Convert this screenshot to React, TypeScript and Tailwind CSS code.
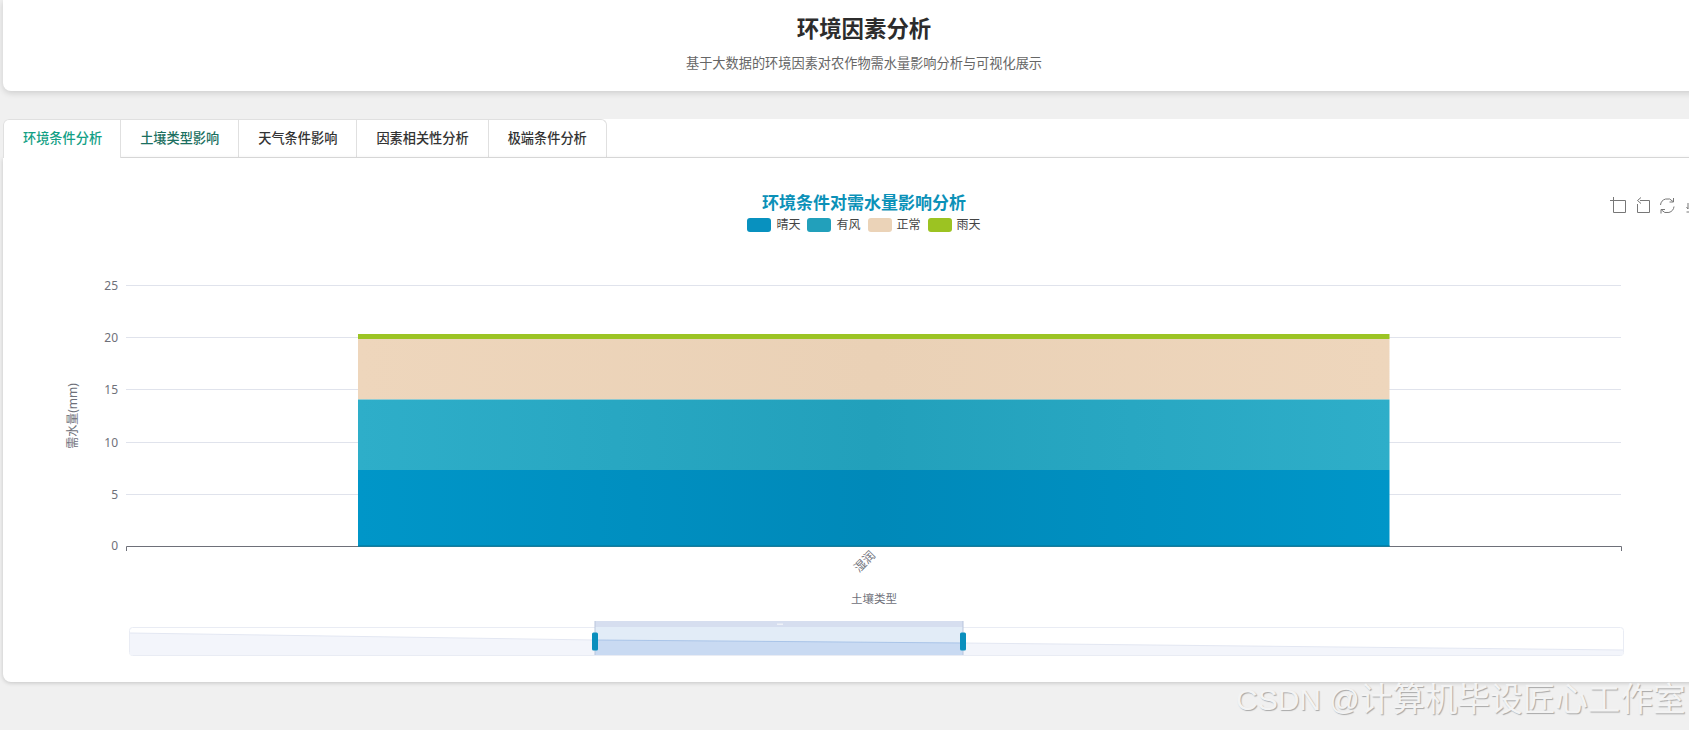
import React from 'react';

const cjk = { fontFamily: '"Noto Sans", "Noto Sans CJK SC", sans-serif' };

const tabs = [
  { name: '环境条件分析', color: 'text-[#12a085]' },
  { name: '土壤类型影响', color: 'text-[#1b6f60]' },
  { name: '天气条件影响', color: 'text-[#333333]' },
  { name: '因素相关性分析', color: 'text-[#333333]' },
  { name: '极端条件分析', color: 'text-[#333333]' },
];

const legend = [
  { name: '晴天', color: 'bg-[#0891bf]' },
  { name: '有风', color: 'bg-[#22a0bb]' },
  { name: '正常', color: 'bg-[#ebd3b8]' },
  { name: '雨天', color: 'bg-[#9cc322]' },
];

const ticks = [
  { label: '25', y: 285.5 },
  { label: '20', y: 337.5 },
  { label: '15', y: 389.5 },
  { label: '10', y: 442.5 },
  { label: '5', y: 494.5 },
];

const Toolbox = () => (
  <svg width="80" height="18" viewBox="0 0 80 18" fill="none" stroke="#777" strokeWidth="1" className="absolute left-[1607px] top-[39px]">
    {/* zoom */}
    <path d="M0 3.5H15.5V15.5H3.5V0" />
    {/* back */}
    <path d="M30 3.5H39.5V15.5H27.5V7M31 0.5L27.5 3.5L31 6.5" />
    {/* restore */}
    <path d="M50.5 8A7 7 0 0 1 63 4.5M64 9.5A7 7 0 0 1 51.5 13M63.5 1V5H59.5M51 16.5V12.5H55" />
    {/* save, runs off the page */}
    <path d="M78 6V12M76.5 10L78 12M76.5 15H79.6" />
  </svg>
);

const Chart = () => (
  <svg width="1722" height="450" viewBox="3 232 1722 450" className="block self-start" style={cjk}>
    <defs>
      <linearGradient id="blue" x1="0" x2="1" y1="0" y2="0">
        <stop offset="0" stopColor="#0096c8" />
        <stop offset="0.5" stopColor="#0089b9" />
        <stop offset="1" stopColor="#0096c8" />
      </linearGradient>
      <linearGradient id="teal" x1="0" x2="1" y1="0" y2="0">
        <stop offset="0" stopColor="#2eaec9" />
        <stop offset="0.5" stopColor="#22a0bb" />
        <stop offset="1" stopColor="#2eaec9" />
      </linearGradient>
      <linearGradient id="sand" x1="0" x2="1" y1="0" y2="0">
        <stop offset="0" stopColor="#eed6bc" />
        <stop offset="0.5" stopColor="#ead1b6" />
        <stop offset="1" stopColor="#eed6bc" />
      </linearGradient>
    </defs>

    {/* y axis */}
    {ticks.map((t) => (
      <g key={t.label}>
        <line x1="126" x2="1621" y1={t.y} y2={t.y} stroke="#e0e3ec" />
        <text x="118" y={t.y + 4} textAnchor="end" fontSize="12" fill="#6e7079">{t.label}</text>
      </g>
    ))}
    <text x="118" y="550" textAnchor="end" fontSize="12" fill="#6e7079">0</text>
    <text transform="translate(77 416) rotate(-90)" textAnchor="middle" fontSize="12" fill="#6e7079">需水量(mm)</text>

    {/* stacked bar */}
    <rect x="358" y="334" width="1031.5" height="5" fill="#9cc424" />
    <rect x="358" y="339" width="1031.5" height="60.5" fill="url(#sand)" />
    <rect x="358" y="399.5" width="1031.5" height="70.5" fill="url(#teal)" />
    <rect x="358" y="470" width="1031.5" height="76" fill="url(#blue)" />

    {/* x axis */}
    <path d="M126.5 551V546.5H1621.5V551" stroke="#6e7079" fill="none" />
    <line x1="358" x2="1389.5" y1="546" y2="546" stroke="#007fa6" strokeWidth="1.5" />
    <text transform="translate(876 556) rotate(-45)" textAnchor="end" fontSize="12" fill="#6e7079">湿润</text>
    <text x="874" y="603" textAnchor="middle" fontSize="11.5" fill="#6e7079">土壤类型</text>

    {/* data zoom */}
    <rect x="129.5" y="627.5" width="1494" height="28" rx="3" fill="#fff" stroke="#e9ecf4" />
    <path d="M130 633L595 640L963 643L1623 650V655H130Z" fill="#f3f5fb" />
    <path d="M130 633L595 640L963 643L1623 650" fill="none" stroke="#e3e7f2" />
    <rect x="595" y="627" width="368" height="28" fill="#e2ecf7" />
    <path d="M595 640L963 643V655H595Z" fill="#c9daf2" />
    <path d="M595 640L963 643" fill="none" stroke="#a9c4e8" />
    <rect x="595" y="621" width="368" height="6" fill="#d6deef" />
    <rect x="777" y="623.5" width="6" height="1.5" fill="#eef1f8" />
    <line x1="595" x2="595" y1="621" y2="655" stroke="#b9c5dc" />
    <line x1="963" x2="963" y1="621" y2="655" stroke="#b9c5dc" />
    <rect x="592" y="632.5" width="6" height="18" rx="1.5" fill="#0a8fbd" />
    <rect x="960" y="632.5" width="6" height="18" rx="1.5" fill="#0a8fbd" />
  </svg>
);

const App = () => (
  <div className="relative h-[730px] w-[1689px] overflow-hidden bg-[#f0f0f0]" style={cjk}>
    {/* Header */}
    <div className="ml-[3px] flex h-[91px] w-[1722px] flex-col items-center rounded-b-lg bg-white shadow-[0_2px_6px_rgba(0,0,0,0.15)]">
      <h1 className="mt-[13px] text-[22.4px] leading-[32px] font-bold text-[#2c2c2c]">环境因素分析</h1>
      <p className="mt-[9px] text-[13.2px] leading-[18px] text-[#666666]">基于大数据的环境因素对农作物需水量影响分析与可视化展示</p>
    </div>

    {/* Tabs */}
    <div className="mt-[28px] ml-[3px] flex h-[39px] w-[1722px] rounded-tl-md border-b border-[#e0e0e0] bg-white">
      {tabs.map((tab, i) => (
        <div
          key={tab.name}
          className={`flex items-center border-t border-r border-[#e0e0e0] px-[19px] text-[13.2px] font-medium ${tab.color} ${i === 0 ? 'relative z-10 h-[39px] rounded-tl-md border-l bg-white pr-[18px]' : ''} ${i === 4 ? 'rounded-tr-md' : ''}`}
        >
          {tab.name}
        </div>
      ))}
    </div>

    {/* Chart panel */}
    <div className="relative ml-[3px] flex h-[524px] w-[1722px] flex-col items-center rounded-b-lg bg-white pt-[35px] shadow-[0_1px_4px_rgba(0,0,0,0.18)]">
      <h2 className="text-[17px] leading-[20px] font-bold text-[#0b91b8]">环境条件对需水量影响分析</h2>
      <div className="mt-[5px] flex h-[14px] items-center gap-[7px]">
        {legend.map((item) => (
          <div key={item.name} className="flex items-center gap-[5px]">
            <span className={`h-[14px] w-[24px] rounded-[3px] ${item.color}`} />
            <span className="text-[12px] leading-[14px] text-[#444444]">{item.name}</span>
          </div>
        ))}
      </div>
      <Toolbox />
      <Chart />
    </div>

    {/* Watermark */}
    <div
      className="absolute top-[680px] left-[1236px] flex items-center whitespace-nowrap text-[#f3f3f3] leading-[40px] [text-shadow:1px_1px_1px_#a8a8a8]"
      style={{ fontFamily: '"Liberation Sans", "Noto Sans CJK SC", sans-serif' }}
    >
      <span className="text-[30px]">CSDN @</span>
      <span className="text-[32.6px]">计算机毕设匠心工作室</span>
    </div>
  </div>
);

export default App;
